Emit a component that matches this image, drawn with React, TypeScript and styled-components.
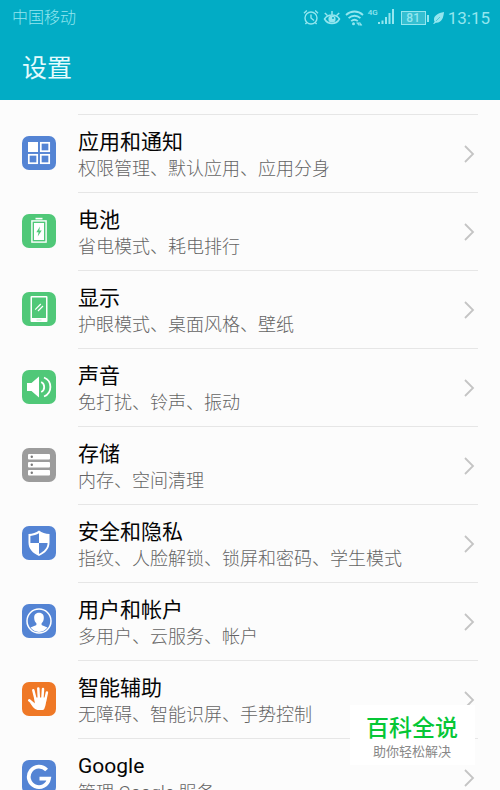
import React from "react";
import styled, { createGlobalStyle } from "styled-components";

const GlobalStyle = createGlobalStyle`
  * { box-sizing: border-box; }
  body {
    margin: 0;
    background: #fcfcfc;
    font-family: Roboto, "Noto Sans CJK SC", sans-serif;
  }
`;

const Screen = styled.div`
  position: relative;
  display: flex;
  flex-direction: column;
  height: 100vh;
  overflow: hidden;
`;

const Header = styled.header`
  flex: none;
  background: #02acc5;
  padding-bottom: 12px;
`;

const StatusBar = styled.div`
  display: flex;
  align-items: center;
  justify-content: space-between;
  height: 36px;
  padding: 0 10px 0 12px;
  color: #93e6ef;
`;

const Carrier = styled.span`
  font-size: 16px;
  line-height: 24px;
  font-weight: 300;
`;

const Indicators = styled.div`
  display: flex;
  align-items: center;
  gap: 4px;
`;

const Clock = styled.time`
  font-size: 17px;
  line-height: 24px;
`;

const Title = styled.h1`
  margin: 0;
  padding: 14px 22px 0;
  color: #e4fbfd;
  font-size: 25px;
  line-height: 38px;
  font-weight: 400;
`;

const List = styled.ul`
  list-style: none;
  margin: 0;
  padding: 14px 22px 0;
`;

const Item = styled.li`
  display: flex;
`;

const RowLink = styled.a`
  display: flex;
  flex: 1;
  gap: 22px;
  align-items: center;
  color: inherit;
  text-decoration: none;
`;

const Content = styled.div`
  display: flex;
  flex: 1;
  align-items: center;
  justify-content: space-between;
  height: 78px;
  padding-right: 3px;
  border-top: 1px solid #e6e6e6;
`;

const Texts = styled.div`
  padding-top: 2px;
`;

const Label = styled.div`
  font-size: 21px;
  line-height: 28px;
  color: #050505;
`;

const Summary = styled.div`
  font-size: 18px;
  line-height: 26px;
  font-weight: 300;
  color: #646464;
`;

const Badge = styled.aside`
  position: absolute;
  right: 25px;
  bottom: 25px;
  display: flex;
  flex-direction: column;
  align-items: center;
  padding: 9px 17px 5px 16px;
  background: #fff;
`;

const BadgeName = styled.strong`
  font-size: 23px;
  line-height: 30px;
  font-weight: 500;
  color: #06c736;
`;

const BadgeText = styled.span`
  font-size: 13px;
  line-height: 16px;
  color: #888;
`;

const Tile = ({ color, children }: { color: string; children: React.ReactNode }) => (
  <svg width="34" height="34" viewBox="0 0 34 34" fill="none" aria-hidden="true">
    <rect width="34" height="34" rx="7" fill={color} />
    {children}
  </svg>
);

const BLUE = "#5484d4";
const GREEN = "#50c878";

const AppsIcon = () => (
  <Tile color={BLUE}>
    <rect x="6" y="6" width="10" height="10" fill="#fff" />
    <g stroke="#fff" strokeWidth="1.7">
      <rect x="18.8" y="6.8" width="8.4" height="8.4" />
      <rect x="6.8" y="18.8" width="8.4" height="8.4" />
      <rect x="18.8" y="18.8" width="8.4" height="8.4" />
    </g>
  </Tile>
);

const BatteryIcon = () => (
  <Tile color={GREEN}>
    <rect x="13.5" y="3.8" width="7" height="1.6" fill="#fff" />
    <rect x="9.9" y="6.9" width="14.2" height="21.2" stroke="#fff" strokeWidth="1.4" />
    <rect x="12" y="9" width="10" height="17" fill="#fff" />
    <path d="M18 12.500 14.300 18.300h2.300l-.9 4.200 4-6h-2.400z" fill={GREEN} />
  </Tile>
);

const DisplayIcon = () => (
  <Tile color={GREEN}>
    <rect x="8.5" y="4" width="17" height="26" rx="1" fill="#fff" />
    <path d="M10 5.500h14v20.500H10z" fill={GREEN} />
    <rect x="14.5" y="27.500" width="5" height="1" fill="#c5eed2" />
    <path d="m13.2 17.6 5.6-5.6M16 19l5-5" stroke="#fff" strokeWidth="1.2" />
  </Tile>
);

const SoundIcon = () => (
  <Tile color={GREEN}>
    <path d="M5 13h4.5L17 6.500v21L9.500 21H5z" fill="#fff" />
    <path d="M19.200 12c4 2 4 8 0 10M22 7.500c8.500 3.500 8.500 15.500 0 19" stroke="#fff" strokeWidth="1.800" />
  </Tile>
);

const StorageIcon = () => (
  <Tile color="#9c9c9c">
    {[6, 14, 22].map((y) => (
      <g key={y}>
        <rect x="6" y={y} width="22" height="5.6" rx="1" fill="#fff" />
        <circle cx="9.800" cy={y + 2.8} r="1.2" fill="#777" />
      </g>
    ))}
  </Tile>
);

const ShieldIcon = () => (
  <Tile color={BLUE}>
    <path d="M17 4.500c3 2.300 6.300 3.400 10.500 3.600v8.400c0 6.400-4.200 10.600-10.500 13.500C10.700 27.100 6.500 22.900 6.500 16.500V8.100C10.700 7.900 14 6.800 17 4.500z" fill="#fff" />
    <path d="M17 7.200V17H8.400V9.900c3.300-.4 6.200-1.200 8.600-2.700zM17 17h8.600c-.2 5-3.400 8.300-8.600 10.900z" fill={BLUE} />
  </Tile>
);

const UserIcon = () => (
  <Tile color={BLUE}>
    <circle cx="17" cy="17" r="12" stroke="#fff" strokeWidth="1.5" />
    <path d="M17 8.700c3.500 0 5 2.300 4.800 5.500-.1 2.200-.9 3.800-2.200 5v1.700c.9.900 3.400 1.200 5.900 2.700A11 11 0 0 1 17 28a11 11 0 0 1-8.500-4.400c2.500-1.500 5-1.800 5.900-2.700v-1.700c-1.300-1.200-2.100-2.800-2.200-5C12 11 13.500 8.700 17 8.700z" fill="#fff" />
  </Tile>
);

const HandIcon = () => (
  <Tile color="#ef7826">
    <g stroke="#fff" strokeLinecap="round" strokeWidth="2.500">
      <path d="m11.300 8.300 2.500 10M16.300 6.400l.6 11M21 7l-.7 11M24.900 10.400l-1.900 9M7.200 18.300l5.300 4.500" />
    </g>
    <path d="M12.400 15.500h11.700c.2 4.500-.3 8-1.600 10.700-.4.900-.7 1.700-1.800 1.700h-5.200c-1.700 0-3.200-1.200-4.600-2.800l-2.800-4 4.700.6z" fill="#fff" />
  </Tile>
);

const GoogleIcon = () => (
  <Tile color={BLUE}>
    <path d="M24.600 10.100A10.200 10.200 0 1 0 27 18.700H17.500" stroke="#fff" strokeWidth="3.800" />
  </Tile>
);

const Chevron = () => (
  <svg width="12" height="20" viewBox="0 0 12 20" fill="none" aria-hidden="true">
    <path d="m2 2 8 8-8 8" stroke="#c4c4c4" strokeWidth="1.800" />
  </svg>
);

const AlarmIcon = () => (
  <svg width="16" height="18" viewBox="0 0 16 18" fill="none" stroke="currentColor" strokeWidth="1.400" aria-hidden="true">
    <circle cx="8" cy="9" r="6" />
    <path d="M8 5.500V9l3 2.500M1 4.300 3.800 1.500M15 4.300l-2.800-2.800M3.800 13.500l-1.400 1.500M12.200 13.500l1.400 1.500" />
  </svg>
);

const EyeIcon = () => (
  <svg width="18" height="18" viewBox="0 0 18 18" fill="none" stroke="currentColor" strokeWidth="1.500" aria-hidden="true">
    <path d="M1.500 10C5 4.500 13 4.500 16.500 10 13 16 5 16 1.500 10zM9 5.500V2M4.200 6.300 1.800 4M13.800 6.300 16.200 4" />
    <circle cx="9" cy="10" r="3.600" fill="currentColor" stroke="none" />
    <circle cx="10" cy="9" r="1" fill="#02acc5" stroke="none" />
  </svg>
);

const WifiIcon = () => (
  <svg width="19" height="18" viewBox="0 0 19 18" fill="none" stroke="currentColor" strokeWidth="1.800" aria-hidden="true">
    <path d="M1 6c5-4.700 12-4.700 17 0M3.600 9.200c3.500-3.300 8.300-3.300 11.800 0M6.200 12.200c2-1.800 4.600-1.800 6.600 0" />
    <circle cx="8.500" cy="14.800" r="1.500" fill="currentColor" stroke="none" />
    <path d="M11.500 13.800h2.400v2.700l-2.400-2.700M17 16.200h-2.300v-3l2.300 3" fill="currentColor" strokeWidth=".5" />
  </svg>
);

const Cellular = styled.div`
  display: flex;
  align-items: flex-start;
  height: 18px;
  margin-right: 3px;
`;

const Network = styled.span`
  font-size: 8px;
  line-height: 8px;
  font-weight: 500;
`;

const SignalIcon = () => (
  <svg width="16" height="18" viewBox="0 0 16 18" fill="currentColor" aria-hidden="true">
    <path d="M0 13h2v2H0zM3.500 11.500h2V15h-2zM7 8h2v7H7zM10.500 4h2v11h-2zM14 0h2v15h-2z" />
  </svg>
);

const PowerLevel = styled.div`
  display: flex;
  align-items: center;
`;

const PowerCell = styled.span`
  width: 25px;
  height: 14px;
  border: 1px solid #93e6ef;
  background: #35bfd1;
  font-size: 12px;
  line-height: 12px;
  font-weight: 500;
  text-align: center;
`;

const PowerCap = styled.span`
  width: 2px;
  height: 7px;
  margin-left: 1px;
  background: #93e6ef;
`;

const LeafIcon = () => (
  <svg width="11" height="14" viewBox="0 0 11 14" fill="currentColor" aria-hidden="true">
    <path d="M11 1C5 2 1 4.500 1 8.500c0 1 .2 1.700.6 2.300L0 13l1.500-.2 1.300-1.100C8.500 12.200 10.500 7 11 1z" />
    <path d="M3 10 7 6" stroke="#02acc5" strokeWidth=".5" />
  </svg>
);

const settings = [
  { id: "apps", label: "应用和通知", summary: "权限管理、默认应用、应用分身", Icon: AppsIcon },
  { id: "battery", label: "电池", summary: "省电模式、耗电排行", Icon: BatteryIcon },
  { id: "display", label: "显示", summary: "护眼模式、桌面风格、壁纸", Icon: DisplayIcon },
  { id: "sound", label: "声音", summary: "免打扰、铃声、振动", Icon: SoundIcon },
  { id: "storage", label: "存储", summary: "内存、空间清理", Icon: StorageIcon },
  { id: "security", label: "安全和隐私", summary: "指纹、人脸解锁、锁屏和密码、学生模式", Icon: ShieldIcon },
  { id: "accounts", label: "用户和帐户", summary: "多用户、云服务、帐户", Icon: UserIcon },
  { id: "assist", label: "智能辅助", summary: "无障碍、智能识屏、手势控制", Icon: HandIcon },
  { id: "google", label: "Google", summary: "管理 Google 服务", Icon: GoogleIcon },
];

export default function App() {
  return (
    <Screen lang="zh-CN">
      <GlobalStyle />
      <Header>
        <StatusBar>
          <Carrier>中国移动</Carrier>
          <Indicators>
            <AlarmIcon />
            <EyeIcon />
            <WifiIcon />
            <Cellular>
              <Network>4G</Network>
              <SignalIcon />
            </Cellular>
            <PowerLevel>
              <PowerCell>81</PowerCell>
              <PowerCap />
            </PowerLevel>
            <LeafIcon />
            <Clock>13:15</Clock>
          </Indicators>
        </StatusBar>
        <Title>设置</Title>
      </Header>
      <main>
        <List>
          {settings.map(({ id, label, summary, Icon }) => (
            <Item key={id}>
              <RowLink href={`#${id}`}>
                <Icon />
                <Content>
                  <Texts>
                    <Label>{label}</Label>
                    <Summary>{summary}</Summary>
                  </Texts>
                  <Chevron />
                </Content>
              </RowLink>
            </Item>
          ))}
        </List>
      </main>
      <Badge>
        <BadgeName>百科全说</BadgeName>
        <BadgeText>助你轻松解决</BadgeText>
      </Badge>
    </Screen>
  );
}
